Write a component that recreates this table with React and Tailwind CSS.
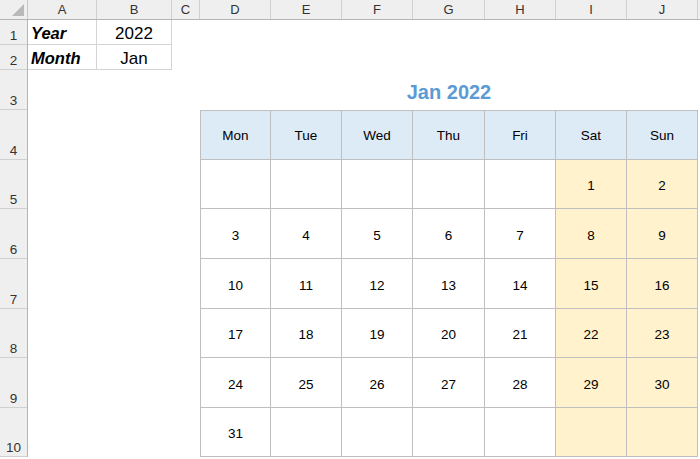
import React from 'react';

const columns = [
  { label: 'A', width: 'w-[69px]' },
  { label: 'B', width: 'w-[75px]' },
  { label: 'C', width: 'w-[28px]' },
  { label: 'D', width: 'w-[71px]' },
  { label: 'E', width: 'w-[71px]' },
  { label: 'F', width: 'w-[71px]' },
  { label: 'G', width: 'w-[72px]' },
  { label: 'H', width: 'w-[71px]' },
  { label: 'I', width: 'w-[71px]' },
  { label: 'J', width: 'w-[71px]' },
];

const rows = [
  { n: 1, height: 'h-[25px]' },
  { n: 2, height: 'h-[25px]' },
  { n: 3, height: 'h-[40px]' },
  { n: 4, height: 'h-[50px]' },
  { n: 5, height: 'h-[49px]' },
  { n: 6, height: 'h-[50px]' },
  { n: 7, height: 'h-[50px]' },
  { n: 8, height: 'h-[49px]' },
  { n: 9, height: 'h-[50px]' },
  { n: 10, height: 'h-[49px]' },
];

const weekdays = ['Mon', 'Tue', 'Wed', 'Thu', 'Fri', 'Sat', 'Sun'];

const weeks = [
  ['', '', '', '', '', 1, 2],
  [3, 4, 5, 6, 7, 8, 9],
  [10, 11, 12, 13, 14, 15, 16],
  [17, 18, 19, 20, 21, 22, 23],
  [24, 25, 26, 27, 28, 29, 30],
  [31, '', '', '', '', '', ''],
];

const App = () => {
  return (
    <div
      className="w-[700px] h-[459px] bg-white overflow-hidden text-black"
      style={{ fontFamily: '"Liberation Sans", "Noto Sans", sans-serif' }}
    >
      {/* Column headers */}
      <div className="flex h-[20px] bg-[#efefef] border-b border-[#b4b4b4]">
        <div className="w-[28px] shrink-0 border-r border-[#c8c8c8] relative">
          <svg className="absolute right-[3px] bottom-[3px]" width="12" height="12" viewBox="0 0 12 12">
            <polygon points="12,0 12,12 0,12" fill="#b9b9b9" />
          </svg>
        </div>
        {columns.map((col) => (
          <div
            key={col.label}
            className={`${col.width} shrink-0 border-r border-[#d0d0d0] flex items-center justify-center text-[13px] text-[#333]`}
          >
            {col.label}
          </div>
        ))}
      </div>

      <div className="flex">
        {/* Row headers */}
        <div className="w-[28px] shrink-0 bg-[#efefef] border-r border-[#b4b4b4]">
          {rows.map((row) => (
            <div
              key={row.n}
              className={`${row.height} border-b border-[#d0d0d0] flex items-end justify-center pb-[2px] leading-none text-[13.5px] text-[#333]`}
            >
              {row.n}
            </div>
          ))}
        </div>

        {/* Sheet */}
        <div className="grid grid-cols-[69px_75px_28px_71px_71px_71px_72px_71px_71px_71px] grid-rows-[25px_25px_40px_50px_49px_50px_50px_49px_50px_49px]">
          <div className="col-start-1 row-start-1 border-r border-b border-[#d4d4d4] flex items-center pl-[3px] pt-[3px] text-[16.5px] font-bold italic">
            Year
          </div>
          <div className="col-start-2 row-start-1 border-r border-b border-[#d4d4d4] flex items-center justify-center pt-[3px] text-[17px]">
            2022
          </div>
          <div className="col-start-1 row-start-2 border-r border-b border-[#d4d4d4] flex items-center pl-[3px] pt-[3px] text-[16.5px] font-bold italic">
            Month
          </div>
          <div className="col-start-2 row-start-2 border-r border-b border-[#d4d4d4] flex items-center justify-center pt-[3px] text-[17px]">
            Jan
          </div>

          {/* Title */}
          <div className="col-start-4 col-span-7 row-start-3 flex items-end justify-center pb-[3px] text-[20px] font-bold text-[#5b9bd5]">
            Jan 2022
          </div>

          {/* Weekday header */}
          {weekdays.map((day, i) => (
            <div
              key={day}
              className={`row-start-4 bg-[#ddebf7] border-t border-r border-b border-[#bfbfbf] flex items-center justify-center pt-[2px] text-[13.5px] ${
                i === 0 ? 'border-l' : ''
              }`}
              style={{ gridColumnStart: i + 4 }}
            >
              {day}
            </div>
          ))}

          {/* Days */}
          {weeks.map((week, w) =>
            week.map((d, i) => (
              <div
                key={`${w}-${i}`}
                className={`border-r border-b border-[#bfbfbf] flex items-center justify-center pt-[5px] text-[13.5px] ${
                  i >= 5 ? 'bg-[#fff2cc]' : 'bg-white'
                } ${i === 0 ? 'border-l' : ''}`}
                style={{ gridColumnStart: i + 4, gridRowStart: w + 5 }}
              >
                {d}
              </div>
            ))
          )}
        </div>
      </div>
    </div>
  );
};

export default App;
